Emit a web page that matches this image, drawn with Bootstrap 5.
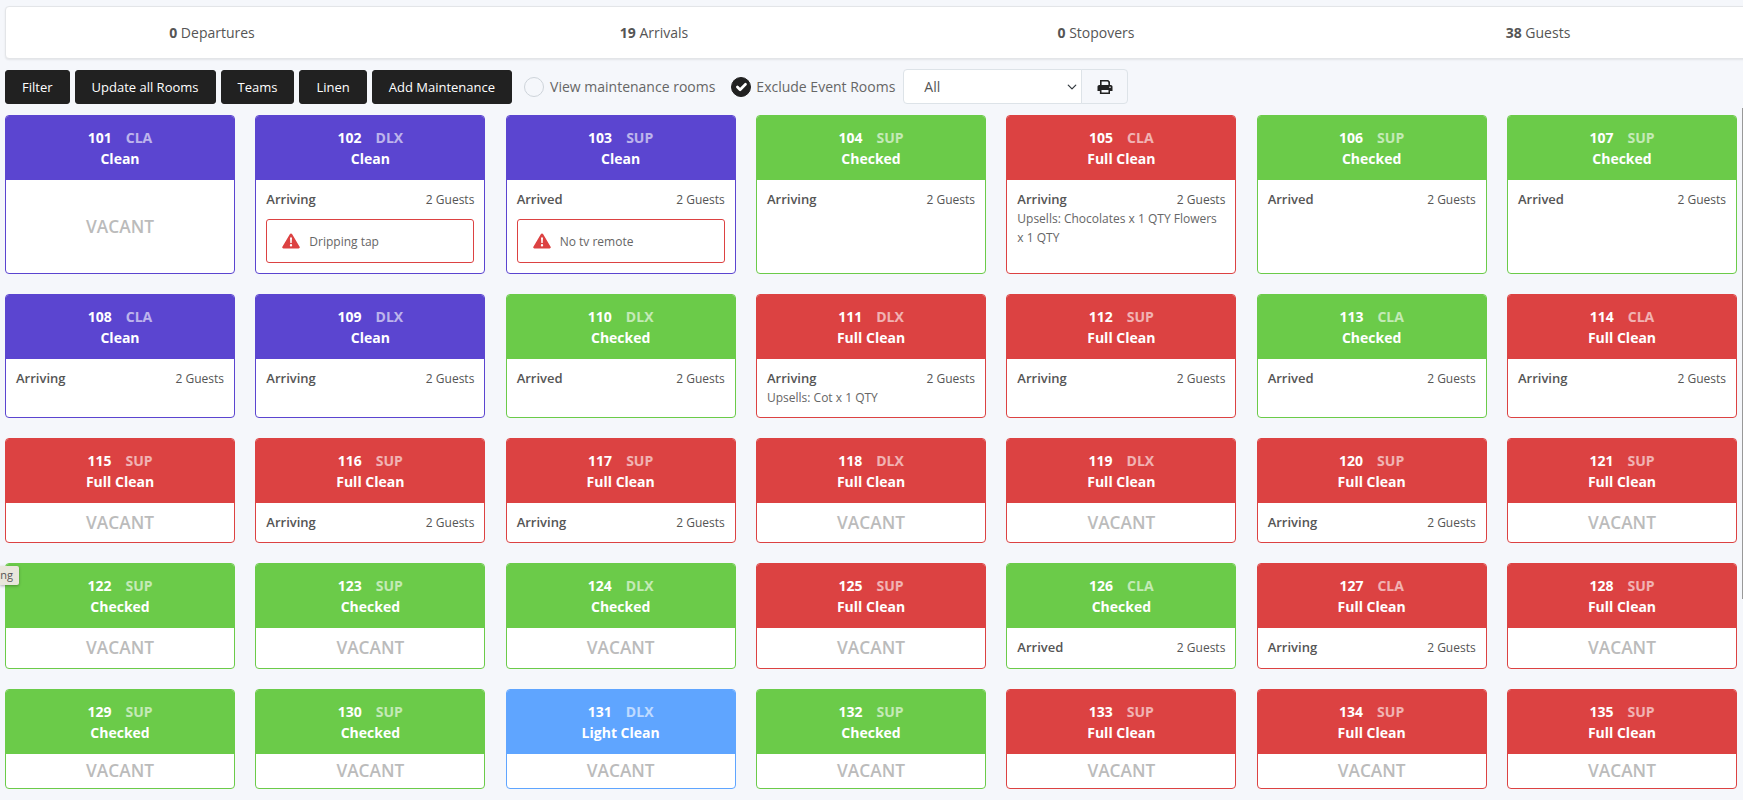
<!DOCTYPE html>
<html lang="en">
<head>
<meta charset="utf-8">
<title>Rooms</title>
<link href="https://cdn.jsdelivr.net/npm/bootstrap@5.3.0/dist/css/bootstrap.min.css" rel="stylesheet">
<style>
html,body{height:100%;overflow:hidden}
body{background:#f5f7fb;font-family:"Open Sans",sans-serif;color:#555;font-size:14px;position:relative}
.page-wrap{padding:6px 6px 0 5px}
.stats-card{width:1770px;height:53px;border:1px solid #e3e5e8;border-radius:4px;box-shadow:0 1px 2px rgba(0,0,0,.08);background:#fff;margin-bottom:10px}
.stats-row{width:1768px;margin-left:-15px;height:100%}
.stats-col{width:442px;text-align:center;font-size:14px;line-height:52px}
.toolbar{height:35px;margin-bottom:11px}
.tool-btns{gap:5px;margin-right:12px}
.tool-btn{background:#212121;border-color:#212121;color:#fff;font-size:13px;font-weight:500;height:34px;padding:0 16px;border-radius:3px;line-height:32px;font-family:inherit}
.round-check{width:20px;height:20px;margin:0 6px 0 0;border-color:#ced4da;background-color:transparent;flex:none}
.round-check:checked{background-color:#212121;border-color:#212121;margin-right:5px}
.check-text{font-size:14px;color:#666;white-space:nowrap}
.filter-group{width:225px;height:35px}
.filter-select{font-size:14px;padding:6px 20px 6px 20px;border-color:#dde3e8;color:#555;border-radius:4px 0 0 4px;background-color:#fff;height:35px;font-family:inherit;background-position:right 3px center;background-size:12px 10px}
.print-box{width:47px;height:35px;justify-content:center;background:#f5f7fb;border-color:#dde3e8;padding:0;border-radius:0 4px 4px 0}
.room-grid{display:grid;grid-template-columns:repeat(7,1fr);grid-template-rows:159px 124px 105px 106px 100px;gap:20px 20.3px;width:1732px}
.room-card{border-radius:4px;overflow:hidden;background:#fff;border:1px solid var(--room)}
.room-card .card-header{background:var(--room);color:#fff;border:0;border-radius:0;height:64px;padding:10.5px 4px;text-align:center;font-weight:700;font-size:14px;line-height:21px}
.room-code{opacity:.6;margin-left:14px}
.room-card .card-body{padding:10px 10px 9px;font-size:12px;line-height:19px}
.room-card .vacant-body{font-size:17.3px;font-weight:600;color:#bbb;padding:0;line-height:24px}
.guest-state{font-size:13px;font-weight:600}
.upsell{color:#666}
.issue-box{border:1px solid #dc4242;border-radius:3px;height:44px;margin-top:10px;padding-left:15px;gap:9px;color:#666}
.state-purple{--room:#5b45d0}
.state-green{--room:#6bcb49}
.state-red{--room:#dc4242}
.state-blue{--room:#5fa5ff}
.hover-tip{position:absolute;left:0;top:566px;width:19px;height:19px;background:#e9e6dc;border-radius:0 2px 2px 0;box-shadow:0 1px 3px rgba(0,0,0,.3);font-size:11px;line-height:18px;padding-right:6px;color:#555;z-index:5}
.scroll-thumb{position:absolute;right:0;top:108px;width:1px;height:491px;background:#999}
</style>
</head>
<body>
<div class="page-wrap">
  <div class="card stats-card">
    <div class="d-flex stats-row">
      <div class="stats-col"><b>0</b> Departures</div>
      <div class="stats-col"><b>19</b> Arrivals</div>
      <div class="stats-col"><b>0</b> Stopovers</div>
      <div class="stats-col"><b>38</b> Guests</div>
    </div>
  </div>
  <div class="d-flex align-items-center toolbar">
    <div class="d-flex align-self-end tool-btns">
      <button class="btn tool-btn">Filter</button>
      <button class="btn tool-btn">Update all Rooms</button>
      <button class="btn tool-btn">Teams</button>
      <button class="btn tool-btn">Linen</button>
      <button class="btn tool-btn">Add Maintenance</button>
    </div>
    <label class="d-flex align-items-center me-3"><input class="form-check-input rounded-circle round-check" type="checkbox"><span class="check-text">View maintenance rooms</span></label>
    <label class="d-flex align-items-center me-2"><input class="form-check-input rounded-circle round-check" type="checkbox" checked><span class="check-text">Exclude Event Rooms</span></label>
    <div class="input-group filter-group flex-nowrap">
      <select class="form-select filter-select"><option>All</option></select>
      <span class="input-group-text print-box">
        <svg width="16" height="16" viewBox="0 0 16 16" fill="#212121"><path d="M3 1h8.200L13 2.800V6.400h-1.600V3.400L10.500 2.600H4.600v3.800H3z"/><path d="M2.200 6h11.600c.9 0 1.700.8 1.700 1.700V12h-2.500v3H2.900v-3H.5V7.700C.5 6.800 1.300 6 2.200 6zM4.500 11v2.500h7V11zM13 7.500a.8.800 0 1 0 0 1.600.8.800 0 0 0 0-1.600z" fill-rule="evenodd"/></svg>
      </span>
    </div>
  </div>
  <div class="room-grid">
    <div class="card room-card state-purple"><div class="card-header">101<span class="room-code">CLA</span><br>Clean</div><div class="card-body vacant-body d-flex align-items-center justify-content-center">VACANT</div></div>
    <div class="card room-card state-purple"><div class="card-header">102<span class="room-code">DLX</span><br>Clean</div><div class="card-body"><div class="d-flex justify-content-between align-items-center"><span class="guest-state">Arriving</span><span>2 Guests</span></div><div class="d-flex align-items-center issue-box"><svg width="18" height="16" viewBox="0 0 18 16"><path d="M9 .5c.5 0 1 .3 1.200.7l7.400 12.500c.5.800-.1 1.800-1 1.800H1.400c-.9 0-1.500-1-1-1.800L7.800 1.200C8 .8 8.500.5 9 .5z" fill="#dc4242"/><path d="M8 4.500h2l-.3 5.500H8.300zM9 11a1.200 1.200 0 1 1 0 2.400A1.200 1.200 0 0 1 9 11z" fill="#fff"/></svg>Dripping tap</div></div></div>
    <div class="card room-card state-purple"><div class="card-header">103<span class="room-code">SUP</span><br>Clean</div><div class="card-body"><div class="d-flex justify-content-between align-items-center"><span class="guest-state">Arrived</span><span>2 Guests</span></div><div class="d-flex align-items-center issue-box"><svg width="18" height="16" viewBox="0 0 18 16"><path d="M9 .5c.5 0 1 .3 1.200.7l7.400 12.500c.5.800-.1 1.800-1 1.800H1.400c-.9 0-1.500-1-1-1.800L7.800 1.200C8 .8 8.500.5 9 .5z" fill="#dc4242"/><path d="M8 4.500h2l-.3 5.500H8.300zM9 11a1.200 1.200 0 1 1 0 2.400A1.200 1.200 0 0 1 9 11z" fill="#fff"/></svg>No tv remote</div></div></div>
    <div class="card room-card state-green"><div class="card-header">104<span class="room-code">SUP</span><br>Checked</div><div class="card-body"><div class="d-flex justify-content-between align-items-center"><span class="guest-state">Arriving</span><span>2 Guests</span></div></div></div>
    <div class="card room-card state-red"><div class="card-header">105<span class="room-code">CLA</span><br>Full Clean</div><div class="card-body"><div class="d-flex justify-content-between align-items-center"><span class="guest-state">Arriving</span><span>2 Guests</span></div><div class="upsell">Upsells: Chocolates x 1 QTY Flowers x 1 QTY</div></div></div>
    <div class="card room-card state-green"><div class="card-header">106<span class="room-code">SUP</span><br>Checked</div><div class="card-body"><div class="d-flex justify-content-between align-items-center"><span class="guest-state">Arrived</span><span>2 Guests</span></div></div></div>
    <div class="card room-card state-green"><div class="card-header">107<span class="room-code">SUP</span><br>Checked</div><div class="card-body"><div class="d-flex justify-content-between align-items-center"><span class="guest-state">Arrived</span><span>2 Guests</span></div></div></div>

    <div class="card room-card state-purple"><div class="card-header">108<span class="room-code">CLA</span><br>Clean</div><div class="card-body"><div class="d-flex justify-content-between align-items-center"><span class="guest-state">Arriving</span><span>2 Guests</span></div></div></div>
    <div class="card room-card state-purple"><div class="card-header">109<span class="room-code">DLX</span><br>Clean</div><div class="card-body"><div class="d-flex justify-content-between align-items-center"><span class="guest-state">Arriving</span><span>2 Guests</span></div></div></div>
    <div class="card room-card state-green"><div class="card-header">110<span class="room-code">DLX</span><br>Checked</div><div class="card-body"><div class="d-flex justify-content-between align-items-center"><span class="guest-state">Arrived</span><span>2 Guests</span></div></div></div>
    <div class="card room-card state-red"><div class="card-header">111<span class="room-code">DLX</span><br>Full Clean</div><div class="card-body"><div class="d-flex justify-content-between align-items-center"><span class="guest-state">Arriving</span><span>2 Guests</span></div><div class="upsell">Upsells: Cot x 1 QTY</div></div></div>
    <div class="card room-card state-red"><div class="card-header">112<span class="room-code">SUP</span><br>Full Clean</div><div class="card-body"><div class="d-flex justify-content-between align-items-center"><span class="guest-state">Arriving</span><span>2 Guests</span></div></div></div>
    <div class="card room-card state-green"><div class="card-header">113<span class="room-code">CLA</span><br>Checked</div><div class="card-body"><div class="d-flex justify-content-between align-items-center"><span class="guest-state">Arrived</span><span>2 Guests</span></div></div></div>
    <div class="card room-card state-red"><div class="card-header">114<span class="room-code">CLA</span><br>Full Clean</div><div class="card-body"><div class="d-flex justify-content-between align-items-center"><span class="guest-state">Arriving</span><span>2 Guests</span></div></div></div>

    <div class="card room-card state-red"><div class="card-header">115<span class="room-code">SUP</span><br>Full Clean</div><div class="card-body vacant-body d-flex align-items-center justify-content-center">VACANT</div></div>
    <div class="card room-card state-red"><div class="card-header">116<span class="room-code">SUP</span><br>Full Clean</div><div class="card-body"><div class="d-flex justify-content-between align-items-center"><span class="guest-state">Arriving</span><span>2 Guests</span></div></div></div>
    <div class="card room-card state-red"><div class="card-header">117<span class="room-code">SUP</span><br>Full Clean</div><div class="card-body"><div class="d-flex justify-content-between align-items-center"><span class="guest-state">Arriving</span><span>2 Guests</span></div></div></div>
    <div class="card room-card state-red"><div class="card-header">118<span class="room-code">DLX</span><br>Full Clean</div><div class="card-body vacant-body d-flex align-items-center justify-content-center">VACANT</div></div>
    <div class="card room-card state-red"><div class="card-header">119<span class="room-code">DLX</span><br>Full Clean</div><div class="card-body vacant-body d-flex align-items-center justify-content-center">VACANT</div></div>
    <div class="card room-card state-red"><div class="card-header">120<span class="room-code">SUP</span><br>Full Clean</div><div class="card-body"><div class="d-flex justify-content-between align-items-center"><span class="guest-state">Arriving</span><span>2 Guests</span></div></div></div>
    <div class="card room-card state-red"><div class="card-header">121<span class="room-code">SUP</span><br>Full Clean</div><div class="card-body vacant-body d-flex align-items-center justify-content-center">VACANT</div></div>

    <div class="card room-card state-green"><div class="card-header">122<span class="room-code">SUP</span><br>Checked</div><div class="card-body vacant-body d-flex align-items-center justify-content-center">VACANT</div></div>
    <div class="card room-card state-green"><div class="card-header">123<span class="room-code">SUP</span><br>Checked</div><div class="card-body vacant-body d-flex align-items-center justify-content-center">VACANT</div></div>
    <div class="card room-card state-green"><div class="card-header">124<span class="room-code">DLX</span><br>Checked</div><div class="card-body vacant-body d-flex align-items-center justify-content-center">VACANT</div></div>
    <div class="card room-card state-red"><div class="card-header">125<span class="room-code">SUP</span><br>Full Clean</div><div class="card-body vacant-body d-flex align-items-center justify-content-center">VACANT</div></div>
    <div class="card room-card state-green"><div class="card-header">126<span class="room-code">CLA</span><br>Checked</div><div class="card-body"><div class="d-flex justify-content-between align-items-center"><span class="guest-state">Arrived</span><span>2 Guests</span></div></div></div>
    <div class="card room-card state-red"><div class="card-header">127<span class="room-code">CLA</span><br>Full Clean</div><div class="card-body"><div class="d-flex justify-content-between align-items-center"><span class="guest-state">Arriving</span><span>2 Guests</span></div></div></div>
    <div class="card room-card state-red"><div class="card-header">128<span class="room-code">SUP</span><br>Full Clean</div><div class="card-body vacant-body d-flex align-items-center justify-content-center">VACANT</div></div>

    <div class="card room-card state-green"><div class="card-header">129<span class="room-code">SUP</span><br>Checked</div><div class="card-body vacant-body d-flex align-items-center justify-content-center">VACANT</div></div>
    <div class="card room-card state-green"><div class="card-header">130<span class="room-code">SUP</span><br>Checked</div><div class="card-body vacant-body d-flex align-items-center justify-content-center">VACANT</div></div>
    <div class="card room-card state-blue"><div class="card-header">131<span class="room-code">DLX</span><br>Light Clean</div><div class="card-body vacant-body d-flex align-items-center justify-content-center">VACANT</div></div>
    <div class="card room-card state-green"><div class="card-header">132<span class="room-code">SUP</span><br>Checked</div><div class="card-body vacant-body d-flex align-items-center justify-content-center">VACANT</div></div>
    <div class="card room-card state-red"><div class="card-header">133<span class="room-code">SUP</span><br>Full Clean</div><div class="card-body vacant-body d-flex align-items-center justify-content-center">VACANT</div></div>
    <div class="card room-card state-red"><div class="card-header">134<span class="room-code">SUP</span><br>Full Clean</div><div class="card-body vacant-body d-flex align-items-center justify-content-center">VACANT</div></div>
    <div class="card room-card state-red"><div class="card-header">135<span class="room-code">SUP</span><br>Full Clean</div><div class="card-body vacant-body d-flex align-items-center justify-content-center">VACANT</div></div>
  </div>
</div>
<div class="hover-tip d-flex justify-content-end"><span>ng</span></div>
<div class="scroll-thumb"></div>
<script src="https://cdn.jsdelivr.net/npm/bootstrap@5.3.0/dist/js/bootstrap.bundle.min.js"></script>
</body>
</html>
